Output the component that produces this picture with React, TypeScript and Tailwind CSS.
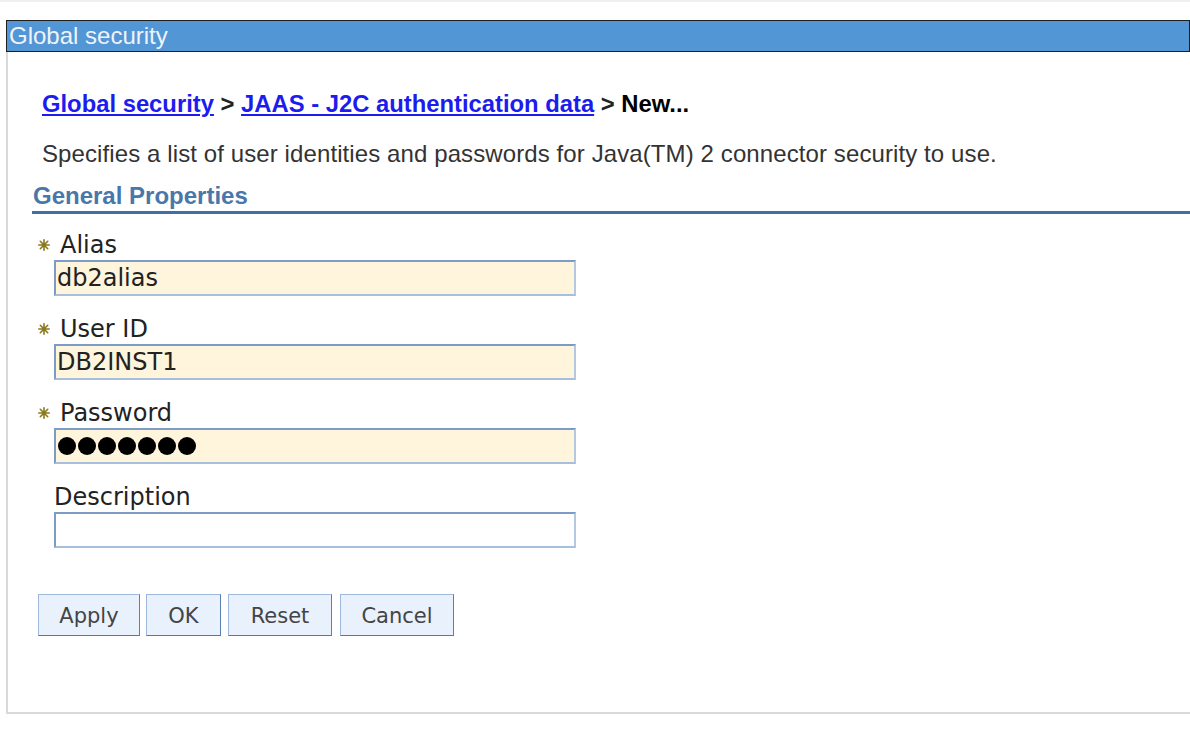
import React from 'react';

const sans = "font-['Liberation_Sans',Arial,sans-serif]";
const deja = "font-['DejaVu_Sans',sans-serif]";

const Required = () => (
    <svg width="12" height="12" viewBox="0 0 12 12" className="mr-[10px] shrink-0">
        <g stroke="#8a7a1c" strokeWidth="1.6" strokeLinecap="round">
            <line x1="6" y1="0.8" x2="6" y2="11.2" />
            <line x1="0.8" y1="6" x2="11.2" y2="6" />
            <line x1="2.3" y1="2.3" x2="9.7" y2="9.7" />
            <line x1="9.7" y1="2.3" x2="2.3" y2="9.7" />
        </g>
        <circle cx="6" cy="6" r="2.2" fill="#8a7a1c" />
    </svg>
);

const Field = ({
    label,
    required,
    value,
    password,
    filled,
    first,
}: {
    label: string;
    required?: boolean;
    value?: string;
    password?: boolean;
    filled?: boolean;
    first?: boolean;
}) => (
    <div className={first ? 'mt-[17px]' : 'mt-[19px]'}>
        <div className={`flex h-[28px] items-center ${required ? 'ml-[6px]' : 'ml-[22px]'}`}>
            {required && <Required />}
            <span className={`${deja} text-[24px] leading-[28px] text-[#222]`}>{label}</span>
        </div>
        <div
            className={`ml-[22px] mt-px flex h-[36px] w-[522px] items-center border-2 border-t-[#7d9cc5] border-l-[#7d9cc5] border-r-[#b3c8e2] border-b-[#a7bedc] pl-px ${
                filled ? 'bg-[#fef5dc]' : 'bg-white'
            }`}
        >
            {password ? (
                <div className="flex gap-[2px] pl-px">
                    {Array.from({ length: 7 }).map((_, i) => (
                        <span key={i} className="h-[18px] w-[18px] rounded-full bg-black" />
                    ))}
                </div>
            ) : (
                <span className={`${deja} text-[24px] leading-[28px] text-[#222]`}>{value}</span>
            )}
        </div>
    </div>
);

const Btn = ({ label, w, ml }: { label: string; w: string; ml: string }) => (
    <button
        className={`${w} ${ml} h-[42px] border border-t-[#9db9dc] border-l-[#9db9dc] border-r-[#5b7fae] border-b-[#56799f] bg-[#e9f1fd] pt-[4px] ${deja} text-[21px] text-[#444]`}
    >
        {label}
    </button>
);

export default function App() {
    return (
        <div className="h-[730px] w-[1190px] overflow-hidden bg-white">
            <div className="h-[2px] bg-[#efefef]" />
            <div className="ml-[6px] mt-[18px]">
                <div
                    className={`h-[32px] border border-[#1f1f1f] bg-[#5396d5] pl-[2px] ${sans} text-[24px] leading-[29px] text-[#eef3fa]`}
                >
                    Global security
                </div>
                <div className="flex h-[662px] flex-col border-b-2 border-l-2 border-[#dadada] pl-[24px]">
                    <div className={`mt-[38px] pl-[10px] ${sans} text-[23.8px] font-bold leading-[28px] text-[#222]`}>
                        <a className="text-[#1c1cf0] underline">Global security</a>
                        {' > '}
                        <a className="text-[#1c1cf0] underline">JAAS - J2C authentication data</a>
                        {' > '}
                        <span className="text-black">New...</span>
                    </div>
                    <p className={`mt-[22px] pl-[10px] ${sans} text-[24px] leading-[28px] tracking-[0.1px] text-[#333]`}>
                        Specifies a list of user identities and passwords for Java(TM) 2 connector security to use.
                    </p>
                    <div
                        className={`mt-[14px] border-b-[3px] border-[#3f6fa6] pb-px pl-px ${sans} text-[24px] font-bold leading-[28px] text-[#4a77aa]`}
                    >
                        General Properties
                    </div>

                    <Field label="Alias" required value="db2alias" filled first />
                    <Field label="User ID" required value="DB2INST1" filled />
                    <Field label="Password" required password filled />
                    <Field label="Description" value="" />

                    <div className="mt-[46px] flex">
                        <Btn label="Apply" w="w-[102px]" ml="ml-[6px]" />
                        <Btn label="OK" w="w-[75px]" ml="ml-[6px]" />
                        <Btn label="Reset" w="w-[104px]" ml="ml-[7px]" />
                        <Btn label="Cancel" w="w-[114px]" ml="ml-[8px]" />
                    </div>
                </div>
            </div>
        </div>
    );
}
